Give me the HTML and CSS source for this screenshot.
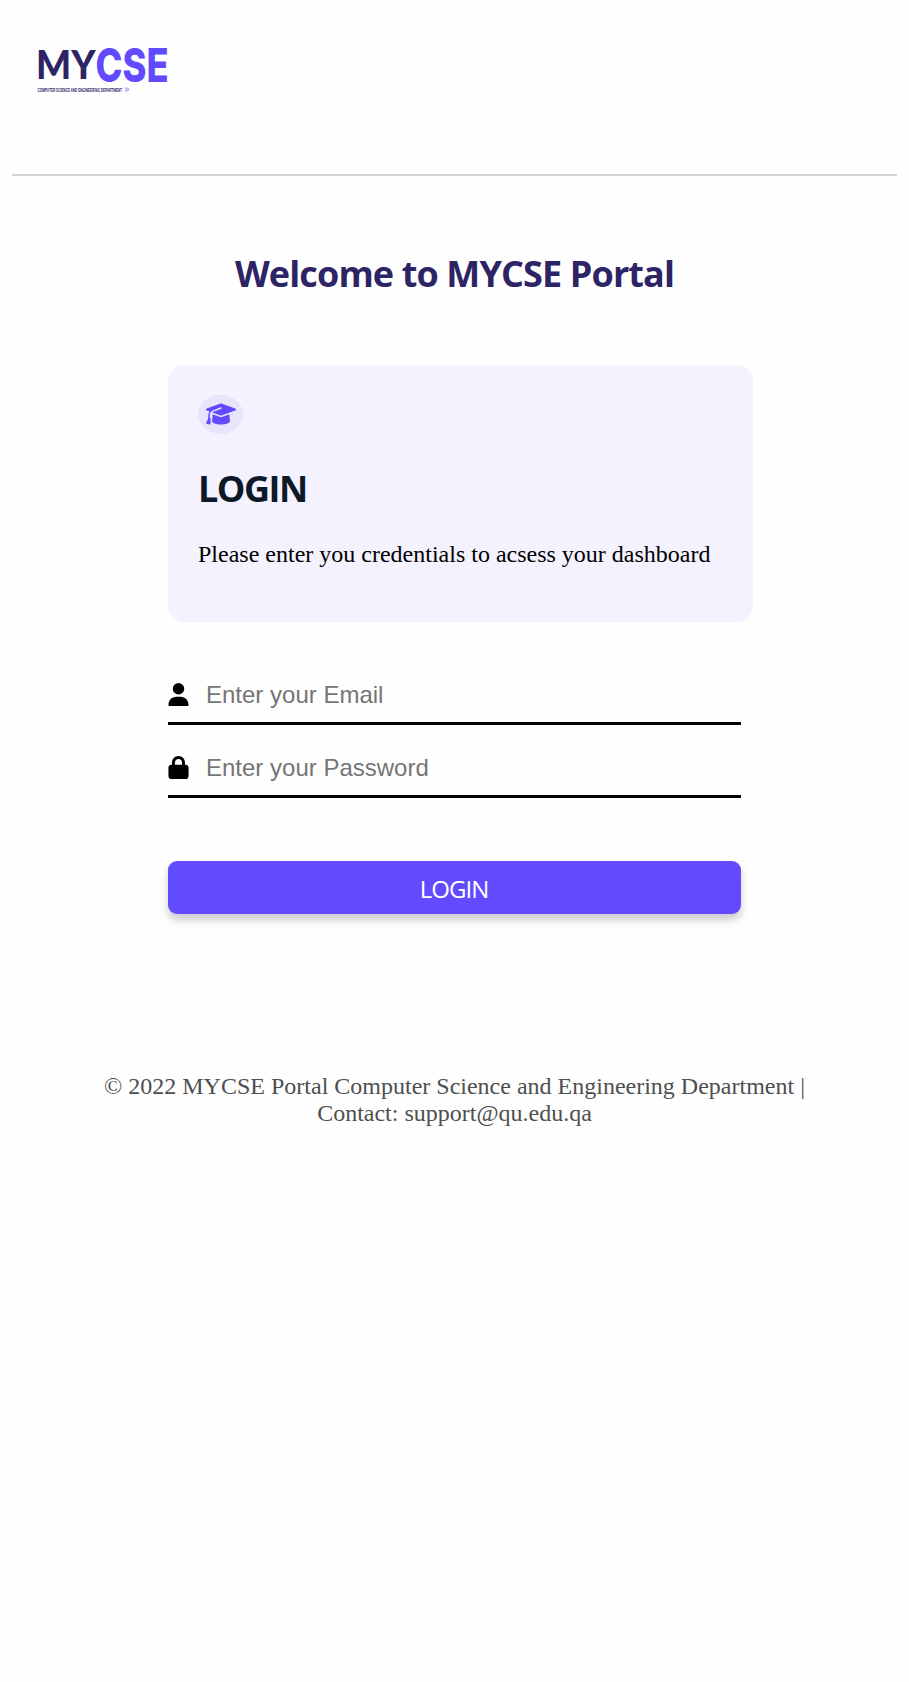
FILE: index.html
```html
<!DOCTYPE html>
<html lang="en">
<head>
<meta charset="utf-8">
<title>MYCSE Portal</title>
<link rel="stylesheet" href="styles.css">
</head>
<body>
<header class="header">
  <svg class="logo" viewBox="0 0 160 70" role="img" aria-label="MYCSE">
    <text class="logo-my" x="6" y="39" textLength="59.500" lengthAdjust="spacingAndGlyphs">MY</text>
    <text class="logo-cse" x="65.500" y="42.300" textLength="73" lengthAdjust="spacingAndGlyphs">CSE</text>
    <text class="logo-caption" x="7.5" y="52" textLength="84.500" lengthAdjust="spacingAndGlyphs">COMPUTER SCIENCE AND ENGINEERING DEPARTMENT</text>
    <path class="logo-arrows" d="M95 47.500l2 2-2 2M97 47.500l2 2-2 2"/>
  </svg>
</header>
<main class="main">
  <h1 class="title">Welcome to MYCSE Portal</h1>
  <section class="card">
    <span class="badge">
      <svg class="cap" viewBox="0 0 640 512"><path d="M320 32c-8.100 0-16.100 1.400-23.700 4.100L15.800 137.400C6.300 140.900 0 149.900 0 160s6.300 19.100 15.800 22.600l57.900 20.900C57.300 229.300 48 259.800 48 291.900V320c0 28.400-10.800 57.700-22.300 80.800-6.500 13-13.900 25.800-22.500 37.600C0 442.700-.9 448.300.9 453.400s6 8.900 11.200 10.200l64 16c4.200 1.100 8.700.3 12.400-2s6.300-6.100 7.100-10.400c8.600-42.800 4.300-81.200-2.100-108.700C90.300 344.300 86 329.800 80 316.500v-24.600c0-30.200 10.200-58.700 27.900-81.500 12.900-15.500 29.600-28 49.200-35.700l157-61.700c8.200-3.200 17.500.8 20.700 9s-.8 17.500-9 20.700l-157 61.700c-12.400 4.900-23.300 12.400-32.200 21.600l159.600 57.600c7.600 2.700 15.600 4.100 23.700 4.100s16.100-1.400 23.700-4.100L624.200 182.600c9.500-3.400 15.800-12.500 15.800-22.600s-6.300-19.100-15.800-22.600L343.700 36.100C336.100 33.400 328.100 32 320 32zM128 408c0 35.300 86 72 192 72s192-36.700 192-72L496.700 262.600 354.500 314c-11.100 4-22.800 6-34.500 6s-23.500-2-34.500-6L143.300 262.600 128 408z"/></svg>
    </span>
    <h2 class="card-title">LOGIN</h2>
    <p class="card-text">Please enter you credentials to acsess your dashboard</p>
  </section>
  <form class="form">
    <label class="field">
      <svg class="icon" viewBox="0 0 448 512"><path d="M224 256a128 128 0 1 0 0-256 128 128 0 1 0 0 256zm-45.700 48C79.800 304 0 383.800 0 482.300 0 498.700 13.300 512 29.700 512h388.600c16.400 0 29.700-13.300 29.700-29.700C448 383.800 368.200 304 269.700 304h-91.400z"/></svg>
      <input class="input" type="email" placeholder="Enter your Email">
    </label>
    <label class="field">
      <svg class="icon" viewBox="0 0 448 512"><path d="M144 144v48h160v-48c0-44.200-35.800-80-80-80s-80 35.800-80 80zm-64 48v-48C80 64.500 144.500 0 224 0s144 64.500 144 144v48h16c35.300 0 64 28.700 64 64v192c0 35.300-28.700 64-64 64H64c-35.300 0-64-28.700-64-64V256c0-35.300 28.700-64 64-64h16z"/></svg>
      <input class="input" type="password" placeholder="Enter your Password">
    </label>
    <button class="button" type="button">LOGIN</button>
  </form>
</main>
<footer class="footer">© 2022 MYCSE Portal Computer Science and Engineering Department | Contact: support@qu.edu.qa</footer>
</body>
</html>
```
FILE: styles.css
```css
* { box-sizing: border-box; }
body {
  margin: 0;
  padding: 0 12px;
  background: #fefefe;
  font-family: "Liberation Serif", serif;
  font-size: 24px;
}
.header {
  height: 176px;
  padding: 40px 0 0 18px;
  border-bottom: 2px solid #d3d3d3;
}
.logo { display: block; width: 160px; height: 70px; overflow: visible; }
.logo-my { font: 900 39.500px Lato, sans-serif; fill: #2d2466; }
.logo-cse { font: 800 46.500px Inter, sans-serif; fill: #624bff; }
.logo-caption { font: 700 6px "Liberation Sans", sans-serif; fill: #2d2466; }
.logo-arrows { fill: none; stroke: #624bff; stroke-width: 0.8; }
.main { width: 573px; margin: 0 auto; }
.title {
  margin: 73px 0 67px;
  font: 700 36px/49px "Open Sans", sans-serif;
  letter-spacing: -0.88px;
  color: #2d2466;
  text-align: center;
  white-space: nowrap;
}
.card {
  width: 585px;
  height: 257px;
  padding: 30px;
  border-radius: 16px;
  background: #f4f2ff;
}
.badge {
  display: flex;
  width: 45px;
  height: 39px;
  padding-bottom: 1px;
  align-items: center;
  justify-content: center;
  border-radius: 50%;
  background: #e8e4fb;
}
.cap { width: 30px; height: 24px; fill: #624bff; }
.card-title {
  margin: 30px 0 0;
  font: 700 36px/49px "Open Sans", sans-serif;
  letter-spacing: -1.5px;
  color: #0d1926;
}
.card-text { margin: 28px 0 0; line-height: 27px; white-space: nowrap; }
.form { margin-top: 47px; }
.field {
  display: flex;
  align-items: center;
  height: 56px;
  margin-bottom: 17px;
  padding-bottom: 1px;
  border-bottom: 3px solid #000;
}
.icon { width: 21px; height: 23px; margin-bottom: 2px; }
.input {
  flex: 1;
  min-width: 0;
  margin-left: 15px;
  padding: 1px 2px;
  border: 0;
  outline: 0;
  background: transparent;
  font: 24px "Liberation Sans", sans-serif;
}
.input::placeholder { color: #757575; }
.button {
  display: block;
  width: 100%;
  height: 53px;
  margin-top: 63px;
  padding: 2px 1px 0 0;
  border: 0;
  border-radius: 9px;
  background: #624bff;
  box-shadow: 0 6px 9px rgba(0, 0, 0, 0.2);
  color: #fff;
  font: 24px/33px "Open Sans", sans-serif;
  letter-spacing: -1px;
}
.footer {
  width: 720px;
  margin: 159px auto 0;
  color: #4f4f4f;
  line-height: 27px;
  text-align: center;
}
```
